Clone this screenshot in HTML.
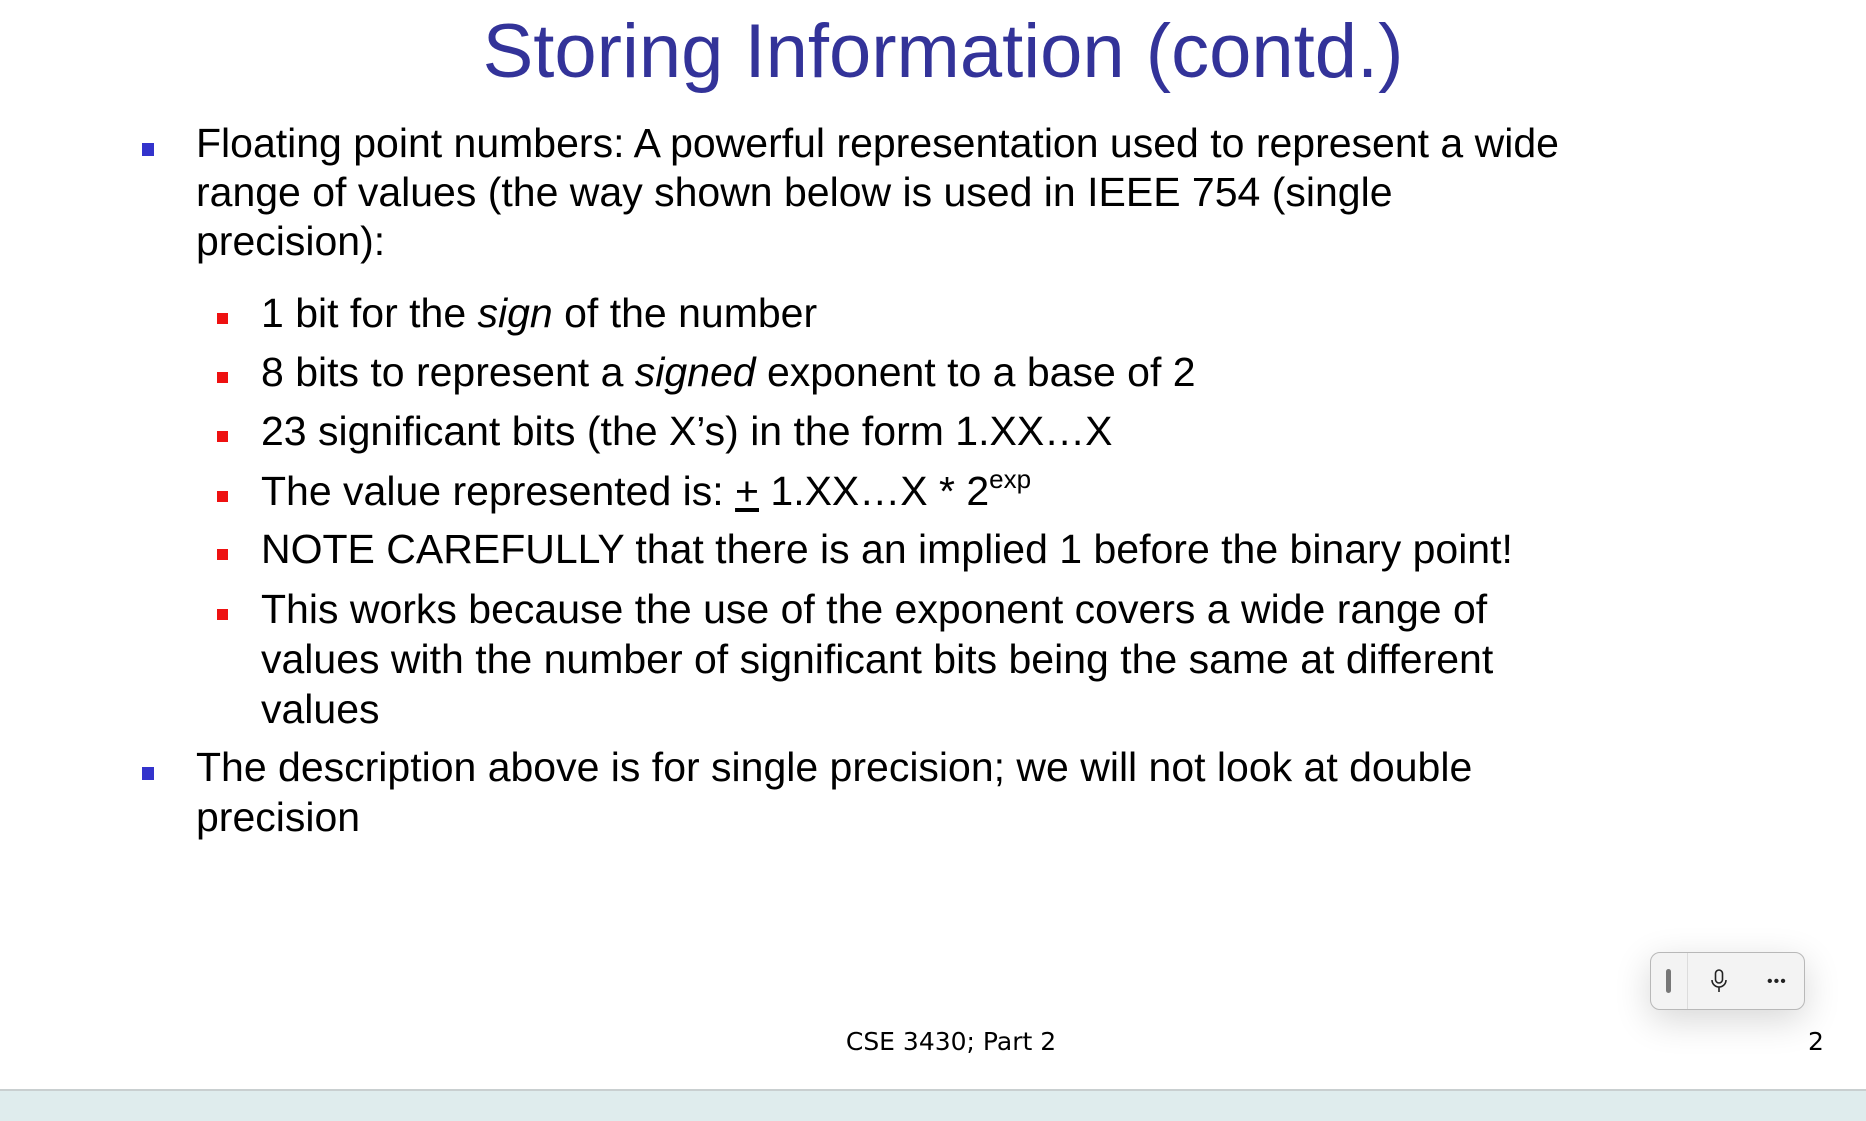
<!DOCTYPE html>
<html><head><meta charset="utf-8"><style>
html,body{margin:0;padding:0;}
body{width:1866px;height:1119px;position:relative;overflow:hidden;background:#fff;font-family:"Liberation Sans",Arial,sans-serif;color:#000;}
.t{position:absolute;white-space:nowrap;line-height:1;}
.b{font-size:41px;}
.title{font-size:76px;color:#333399;left:0;width:1886px;text-align:center;top:14px;}
.sq{position:absolute;}
.blue{background:#3333cc;width:12px;height:13px;}
.red{background:#ee1111;width:11px;height:11px;}
sup{font-size:26px;vertical-align:17px;line-height:0;}
</style></head><body>
<div class="t title">Storing Information (contd.)</div>

<div class="sq blue" style="left:142px;top:143px"></div>
<div class="t b" style="left:196px;top:123px">Floating point numbers: A powerful representation used to represent a wide</div>
<div class="t b" style="left:196px;top:172px">range of values (the way shown below is used in IEEE 754 (single</div>
<div class="t b" style="left:196px;top:221px">precision):</div>

<div class="sq red" style="left:217px;top:313px"></div>
<div class="t b" style="left:261px;top:293px">1 bit for the <i>sign</i> of the number</div>
<div class="sq red" style="left:217px;top:372px"></div>
<div class="t b" style="left:261px;top:352px">8 bits to represent a <i>signed</i> exponent to a base of 2</div>
<div class="sq red" style="left:217px;top:431px"></div>
<div class="t b" style="left:261px;top:411px">23 significant bits (the X’s) in the form 1.XX…X</div>
<div class="sq red" style="left:217px;top:491px"></div>
<div class="t b" style="left:261px;top:471px">The value represented is: <span style="text-decoration:underline">+</span> 1.XX…X * 2<sup>exp</sup></div>
<div class="sq red" style="left:217px;top:549px"></div>
<div class="t b" style="left:261px;top:529px">NOTE CAREFULLY that there is an implied 1 before the binary point!</div>
<div class="sq red" style="left:217px;top:609px"></div>
<div class="t b" style="left:261px;top:589px">This works because the use of the exponent covers a wide range of</div>
<div class="t b" style="left:261px;top:639px">values with the number of significant bits being the same at different</div>
<div class="t b" style="left:261px;top:689px">values</div>

<div class="sq blue" style="left:142px;top:767px"></div>
<div class="t b" style="left:196px;top:747px">The description above is for single precision; we will not look at double</div>
<div class="t b" style="left:196px;top:797px">precision</div>

<div class="t" style="left:0;width:1902px;text-align:center;top:1029px;font-family:'DejaVu Sans',sans-serif;font-size:25px;">CSE 3430; Part 2</div>
<div class="t" style="left:1808px;top:1029px;font-family:'DejaVu Sans',sans-serif;font-size:25px;">2</div>

<div style="position:absolute;left:1650px;top:952px;width:153px;height:56px;background:#f3f3f3;border:1px solid #b8b8b8;border-radius:10px;box-shadow:0 10px 36px rgba(0,0,0,0.16);">
  <div style="position:absolute;left:36px;top:0;width:1px;height:56px;background:#dcdcdc"></div>
  <div style="position:absolute;left:15px;top:16px;width:5px;height:24px;border-radius:3px;background:#777"></div>
  <svg style="position:absolute;left:58px;top:16px" width="20" height="24" viewBox="0 0 20 24"><rect x="6.5" y="1" width="7" height="13" rx="3.5" fill="none" stroke="#222" stroke-width="1.6"/><path d="M3 11a7 7 0 0 0 14 0M10 18v5" fill="none" stroke="#222" stroke-width="1.6"/></svg>
  <div style="position:absolute;left:116px;top:20px;font-size:16px;color:#222;letter-spacing:1px">•••</div>
</div>

<div style="position:absolute;left:0;top:1089px;width:1866px;height:30px;background:#dfeced;border-top:2px solid #c9cfd0;"></div>
</body></html>
